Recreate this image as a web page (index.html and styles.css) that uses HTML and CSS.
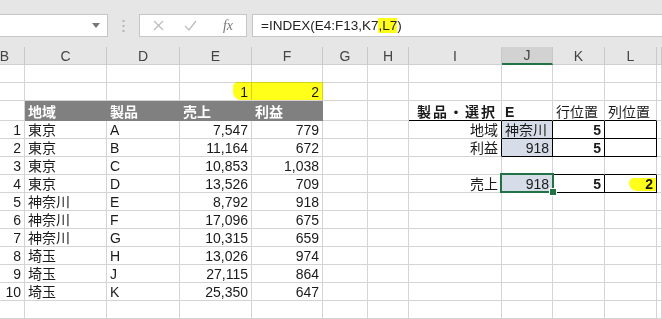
FILE: index.html
```html
<!DOCTYPE html>
<html lang="ja">
<head>
    <meta charset="UTF-8">
    <title>INDEX</title>
    <link rel="stylesheet" href="styles.css">
</head>
<body>
    <div class="fbar">
        <div class="namebox">
            <svg class="caret" width="8" height="5" viewBox="0 0 8 5"><path d="M0 0h8L4 5z" fill="#777"/></svg>
        </div>
        <div class="grip">
            <svg width="3" height="12" viewBox="0 0 3 12"><rect x="0.5" y="0" width="2" height="2" fill="#b4b4b4"/><rect x="0.5" y="5" width="2" height="2" fill="#b4b4b4"/><rect x="0.5" y="10" width="2" height="2" fill="#b4b4b4"/></svg>
        </div>
        <div class="fnbox">
            <svg width="11" height="11" viewBox="0 0 11 11"><path d="M1 1l9 9M10 1l-9 9" stroke="#bdbdbd" stroke-width="1.3"/></svg>
            <svg width="13" height="11" viewBox="0 0 13 11"><path d="M1 6l4 4 7-9" stroke="#bdbdbd" stroke-width="1.3" fill="none"/></svg>
            <span class="fx">fx</span>
        </div>
        <div class="formula">=INDEX(E4:F13,K7<span class="hl">,L7</span>)</div>
    </div>

    <div class="sheetwrap">
        <table class="sheet">
            <colgroup>
                <col class="w-b"><col class="w-c"><col class="w-d"><col class="w-e"><col class="w-f"><col class="w-g">
                <col class="w-h"><col class="w-i"><col class="w-j"><col class="w-k"><col class="w-l"><col class="w-m">
            </colgroup>
            <tr class="hdr">
                <th>B</th><th>C</th><th>D</th><th>E</th><th>F</th><th>G</th><th>H</th><th>I</th><th class="sel">J</th><th>K</th><th>L</th><th></th>
            </tr>
            <tr><td></td><td></td><td></td><td></td><td></td><td></td><td></td><td></td><td></td><td></td><td></td><td></td></tr>
            <tr><td></td><td></td><td></td><td class="n">1</td><td class="n">2</td><td></td><td></td><td></td><td></td><td></td><td></td><td></td></tr>
            <tr class="tall">
                <td></td><td class="gh">地域</td><td class="gh">製品</td><td class="gh">売上</td><td class="gh">利益</td><td></td><td></td>
                <td class="bt n kb wide">製品・選択</td><td class="bt kb">E</td><td class="bt">行位置</td><td class="bt">列位置</td><td></td>
            </tr>
            <tr>
                <td class="n">1</td><td>東京</td><td>A</td><td class="n">7,547</td><td class="n">779</td><td></td><td></td>
                <td class="n br">地域</td><td class="bt br fill">神奈川</td><td class="bt br n kb">5</td><td class="bt br"></td><td></td>
            </tr>
            <tr>
                <td class="n">2</td><td>東京</td><td>B</td><td class="n">11,164</td><td class="n">672</td><td></td><td></td>
                <td class="n br">利益</td><td class="bt br fill n">918</td><td class="bt br n kb">5</td><td class="bt br"></td><td></td>
            </tr>
            <tr>
                <td class="n">3</td><td>東京</td><td>C</td><td class="n">10,853</td><td class="n">1,038</td><td></td><td></td>
                <td></td><td class="bt"></td><td class="bt"></td><td class="bt"></td><td></td>
            </tr>
            <tr>
                <td class="n">4</td><td>東京</td><td>D</td><td class="n">13,526</td><td class="n">709</td><td></td><td></td>
                <td class="n br">売上</td><td class="bt br fill n act">918</td><td class="bt br n kb">5</td><td class="bt br n kb mark"><span class="hl2">2</span></td><td></td>
            </tr>
            <tr><td class="n">5</td><td>神奈川</td><td>E</td><td class="n">8,792</td><td class="n">918</td><td></td><td></td><td></td><td></td><td></td><td></td><td></td></tr>
            <tr><td class="n">6</td><td>神奈川</td><td>F</td><td class="n">17,096</td><td class="n">675</td><td></td><td></td><td></td><td></td><td></td><td></td><td></td></tr>
            <tr><td class="n">7</td><td>神奈川</td><td>G</td><td class="n">10,315</td><td class="n">659</td><td></td><td></td><td></td><td></td><td></td><td></td><td></td></tr>
            <tr><td class="n">8</td><td>埼玉</td><td>H</td><td class="n">13,026</td><td class="n">974</td><td></td><td></td><td></td><td></td><td></td><td></td><td></td></tr>
            <tr><td class="n">9</td><td>埼玉</td><td>J</td><td class="n">27,115</td><td class="n">864</td><td></td><td></td><td></td><td></td><td></td><td></td><td></td></tr>
            <tr><td class="n">10</td><td>埼玉</td><td>K</td><td class="n">25,350</td><td class="n">647</td><td></td><td></td><td></td><td></td><td></td><td></td><td></td></tr>
            <tr><td></td><td></td><td></td><td></td><td></td><td></td><td></td><td></td><td></td><td></td><td></td><td></td></tr>
        </table>
        <!-- highlighter stroke over E3:F3 -->
        <div class="marker"></div>
    </div>
</body>
</html>
```

FILE: styles.css
```css
* {
    margin: 0;
    padding: 0;
    box-sizing: border-box;
}

body {
    width: 662px;
    height: 319px;
    overflow: hidden;
    background: #e6e6e6;
    font-family: "Liberation Sans", "Noto Sans CJK JP", sans-serif;
    color: #1a1a1a;
}

/* formula bar */
.fbar {
    display: flex;
    height: 23px;
    margin-top: 14px;
    margin-bottom: 10px;
}

.namebox {
    width: 109px;
    margin-left: -1px;
    background: #fff;
    border: 1px solid #c6c6c6;
    display: flex;
    align-items: center;
    justify-content: flex-end;
    padding-right: 7px;
}

.grip {
    width: 31px;
    display: flex;
    align-items: center;
    justify-content: center;
}

.fnbox {
    width: 108px;
    background: #fff;
    border: 1px solid #c6c6c6;
    display: grid;
    grid-template-columns: 36px 28px 1fr;
    align-items: center;
    justify-items: center;
}

.fx {
    font-family: "Liberation Serif", serif;
    font-style: italic;
    font-size: 14px;
    color: #777;
    padding-left: 6px;
}

.formula {
    flex: 1;
    margin-left: 5px;
    background: #fff;
    border: 1px solid #c6c6c6;
    border-right: none;
    padding-left: 8px;
    font-size: 13.5px;
    line-height: 21px;
    color: #222;
}

.hl {
    background: #ffff1a;
}

/* sheet */
.sheetwrap {
    position: relative;
    background: #fff;
}

.sheet {
    margin-left: -15px;
    width: 677px;
    table-layout: fixed;
    border-collapse: separate;
    border-spacing: 0;
}

.w-b { width: 40px; }
.w-c { width: 82px; }
.w-d { width: 73px; }
.w-e { width: 72px; }
.w-f { width: 71px; }
.w-g { width: 45px; }
.w-h { width: 41px; }
.w-i { width: 93px; }
.w-j { width: 51px; }
.w-k { width: 52px; }
.w-l { width: 52px; }
.w-m { width: 5px; }

.hdr th {
    height: 18px;
    background: #e6e6e6;
    border-right: 1px solid #c8c8c8;
    border-bottom: 1px solid #d0d0d0;
    font-weight: normal;
    font-size: 14px;
    line-height: 16px;
    color: #444;
    overflow: hidden;
}

.hdr th.sel {
    background: #d2d2d2;
    border-bottom: 2px solid #217346;
}

.sheet td {
    height: 18px;
    padding: 0 3px;
    border-right: 1px solid #d4d4d4;
    border-bottom: 1px solid #d4d4d4;
    font-size: 14px;
    line-height: 16px;
    white-space: nowrap;
    overflow: hidden;
    vertical-align: bottom;
}

.sheet tr.tall td {
    height: 20px;
}

.sheet td.n {
    text-align: right;
}

.sheet td.gh {
    background: #808080;
    border-color: #808080;
    color: #fff;
    font-weight: bold;
}

.sheet td.kb {
    font-weight: bold;
}

.sheet td.wide {
    letter-spacing: 2px;
    padding-right: 4px;
}

.sheet td.bt {
    border-bottom-color: #000;
}

.sheet td.br {
    border-right-color: #000;
}

.sheet td.fill {
    background: #d6dce8;
}

.sheet td.act {
    position: relative;
    overflow: visible;
}

.sheet td.act::before {
    content: "";
    position: absolute;
    top: -2px;
    left: -2px;
    right: -2px;
    bottom: -1px;
    border: 2px solid #217346;
}

.sheet td.act::after {
    content: "";
    position: absolute;
    right: -5px;
    bottom: -4px;
    width: 6px;
    height: 6px;
    background: #217346;
    border: 1px solid #fff;
}

.sheet td.mark {
    padding-right: 0;
}

.hl2 {
    display: inline-block;
    background: #ffff1a;
    padding: 0 3px 0 16px;
    line-height: 13px;
    margin-bottom: 1px;
    border-radius: 5px 0 0 8px;
}

.marker {
    position: absolute;
    left: 233px;
    top: 35px;
    width: 90px;
    height: 18px;
    background: #ffff1a;
    mix-blend-mode: multiply;
    border-radius: 5px 0 0 8px;
}
```
